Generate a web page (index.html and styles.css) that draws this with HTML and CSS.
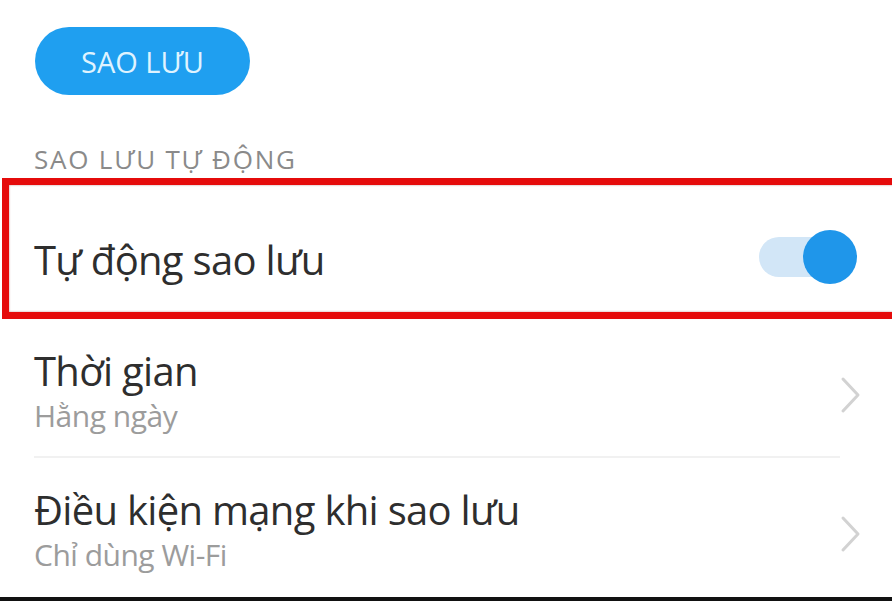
FILE: index.html
```html
<!DOCTYPE html>
<html lang="vi">
<head>
<meta charset="utf-8">
<link rel="stylesheet" href="styles.css">
</head>
<body>
<div class="page">
  <div class="btn-wrap"><div class="btn">SAO LƯU</div></div>
  <div class="section">SAO LƯU TỰ ĐỘNG</div>
  <div class="highlight">
    <div class="row-toggle">
      <span class="title">Tự động sao lưu</span>
      <span class="switch"><span class="knob"></span></span>
    </div>
  </div>
  <div class="item item1">
    <div class="texts">
      <div class="title">Thời gian</div>
      <div class="sub">Hằng ngày</div>
    </div>
    <svg class="chev" viewBox="0 0 22 38" width="22" height="38"><path d="M3 3 L18 19 L3 35" fill="none" stroke="#d2d2d2" stroke-width="3" stroke-linecap="round" stroke-linejoin="round"/></svg>
  </div>
  <div class="sep"></div>
  <div class="item item2">
    <div class="texts">
      <div class="title">Điều kiện mạng khi sao lưu</div>
      <div class="sub">Chỉ dùng Wi-Fi</div>
    </div>
    <svg class="chev" viewBox="0 0 22 38" width="22" height="38"><path d="M3 3 L18 19 L3 35" fill="none" stroke="#d2d2d2" stroke-width="3" stroke-linecap="round" stroke-linejoin="round"/></svg>
  </div>
  <div class="bottom-line"></div>
</div>
</body>
</html>
```
FILE: styles.css
```css
html, body {
  margin: 0;
  padding: 0;
  background: #fff;
  overflow: hidden;
}
.page {
  width: 892px;
  height: 601px;
  position: relative;
  overflow: hidden;
  font-family: "Open Sans", "Noto Sans", sans-serif;
  color: #2e2e2e;
}
.btn-wrap {
  padding: 27px 0 0 35px;
  height: 68px;
}
.btn {
  width: 215px;
  height: 68px;
  border-radius: 34px;
  background: #1f9ff0;
  color: #dff3ff;
  font-size: 29px;
  letter-spacing: 0;
  display: flex;
  align-items: center;
  justify-content: center;
}
.section {
  margin: 48px 0 0 34px;
  font-size: 26px;
  line-height: 32px;
  color: #8a8a8a;
  letter-spacing: 1.8px;
}
.highlight {
  margin: 3px -20px 0 2px;
  border: 7px solid #e50b0b;
  height: 127px;
  box-shadow: inset 0 0 2px rgba(120,0,0,0.5);
}
.row-toggle {
  height: 100%;
  box-sizing: border-box;
  display: flex;
  align-items: center;
  justify-content: space-between;
  padding: 22px 60px 0 25px;
}
.title {
  font-size: 40px;
  line-height: 46px;
  letter-spacing: -0.7px;
  color: #2e2e2e;
}
.switch {
  position: relative;
  width: 86px;
  height: 40px;
  border-radius: 20px;
  background: #d2e6f7;
  margin-top: -6px;
}
.knob {
  position: absolute;
  right: -12px;
  top: -7px;
  width: 54px;
  height: 54px;
  border-radius: 50%;
  background: #1f96ea;
}
.item {
  display: flex;
  justify-content: space-between;
  align-items: flex-start;
  padding: 0 30px 0 34px;
  box-sizing: border-box;
}
.item1 {
  height: 137px;
  padding-top: 29px;
}
.item2 {
  height: 138px;
  padding-top: 29px;
}
.sub {
  font-size: 30px;
  line-height: 36px;
  letter-spacing: -0.5px;
  color: #9c9c9c;
  margin-top: 4px;
}
.chev {
  margin-top: 28px;
}
.sep {
  height: 2px;
  margin: 0 52px 0 34px;
  background: #f1f1f1;
}
.bottom-line {
  position: absolute;
  left: 0;
  right: 0;
  bottom: 0;
  height: 4px;
  background: #111;
}
```
